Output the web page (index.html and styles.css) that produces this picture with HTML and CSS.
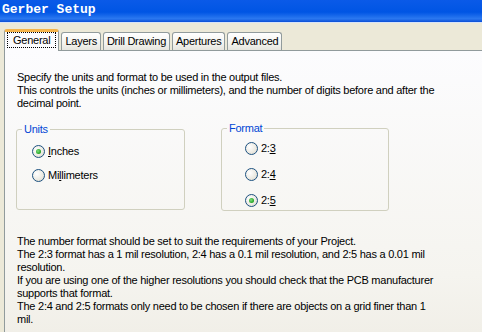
FILE: index.html
```html
<!DOCTYPE html>
<html lang="en">
  <head>
    <meta charset="UTF-8" />
    <title>Gerber Setup</title>
    <link rel="stylesheet" href="styles.css">
  </head>
  <body>
    <div class="titlebar">Gerber Setup</div>
    <div class="dialog">
      <div class="tabs">
        <div class="tab active"><span class="focus">General</span></div>
        <div class="tab">Layers</div>
        <div class="tab">Drill Drawing</div>
        <div class="tab">Apertures</div>
        <div class="tab">Advanced</div>
      </div>
      <div class="panel">
        <p class="intro">
          Specify the units and format to be used in the output files.<br>
          This controls the units (inches or millimeters), and the number of digits before and after the<br>
          decimal point.
        </p>
        <div class="groups">
          <fieldset class="group units">
            <legend>Units</legend>
            <div class="options">
              <label class="radio"><span class="dot checked"></span><span><u>I</u>nches</span></label>
              <label class="radio"><span class="dot"></span><span>Mi<u>l</u>limeters</span></label>
            </div>
          </fieldset>
          <fieldset class="group format">
            <legend>Format</legend>
            <div class="options">
              <label class="radio"><span class="dot"></span><span>2:<u>3</u></span></label>
              <label class="radio"><span class="dot"></span><span>2:<u>4</u></span></label>
              <label class="radio"><span class="dot checked"></span><span>2:<u>5</u></span></label>
            </div>
          </fieldset>
        </div>
        <p class="notes">
          The number format should be set to suit the requirements of your Project.<br>
          The 2:3 format has a 1 mil resolution, 2:4 has a 0.1 mil resolution, and 2:5 has a 0.01 mil<br>
          resolution.<br>
          If you are using one of the higher resolutions you should check that the PCB manufacturer<br>
          supports that format.<br>
          The 2:4 and 2:5 formats only need to be chosen if there are objects on a grid finer than 1<br>
          mil.
        </p>
      </div>
    </div>
  </body>
</html>
```

FILE: styles.css
```css
body {
  margin: 0;
  background-color: #ece9d8;
  font-family: "Liberation Sans", Arial, sans-serif;
  font-size: 11px;
  letter-spacing: -0.25px;
  color: #000;
  overflow: hidden;
  width: 482px;
  height: 332px;
}
.titlebar {
  height: 22px;
  line-height: 19px;
  padding-left: 2px;
  color: #fff;
  font-family: "Liberation Mono", "DejaVu Sans Mono", monospace;
  font-weight: bold;
  font-size: 13px;
  letter-spacing: 0;
  background: linear-gradient(#0a5ae8, #0055e4 55%, #2b78f0 85%, #0b4fd6);
  border-bottom: 1px solid #d7e3f8;
}
.dialog {
  padding: 7px 0 0 4px;
}
.tabs {
  display: flex;
  align-items: flex-end;
  gap: 2px;
  height: 20px;
}
.tab {
  height: 17px;
  line-height: 17px;
  padding: 0 3px;
  border: 1px solid #919b9c;
  border-bottom: none;
  border-radius: 3px 3px 0 0;
  background: linear-gradient(#fff, #f3f3ef 60%, #e6e5de);
}
.tab.active {
  height: 19px;
  line-height: 17px;
  margin-bottom: -1px;
  padding: 0 2px;
  border-top: 3px solid #f5b44a;
  background: #fcfcfe;
  position: relative;
  z-index: 1;
}
.focus {
  display: inline-block;
  line-height: 14px;
  padding: 0 5px;
  border: 1px dotted #000;
}
.panel {
  width: 465px;
  height: 261px;
  border-top: 1px solid #919b9c;
  border-left: 1px solid #919b9c;
  background: linear-gradient(#fcfcfe, #f5f4ef 80%, #f1efe8);
  padding: 20px 0 0 12px;
  line-height: 13px;
  white-space: nowrap;
}
p {
  margin: 0;
}
.groups {
  display: flex;
  gap: 36px;
  margin: 13px 0 0 -1px;
}
.group {
  margin: 0;
  padding: 0;
  border: 1px solid #d0d0bf;
  border-radius: 3px;
}
.group legend {
  color: #0046d5;
  padding: 0 2px;
  margin-left: 5px;
  line-height: 13px;
}
.options {
  display: flex;
  flex-direction: column;
}
.units {
  width: 167px;
  height: 85px;
}
.units .options {
  padding: 9px 0 0 15px;
  gap: 11px;
}
.format {
  width: 166px;
  height: 87px;
  margin-top: -1px;
}
.format .options {
  padding: 7px 0 0 23px;
  gap: 13px;
}
.radio {
  display: flex;
  align-items: center;
  height: 13px;
  gap: 3px;
}
.dot {
  width: 11px;
  height: 11px;
  border: 1px solid #1c5180;
  border-radius: 50%;
  background: radial-gradient(circle at 35% 35%, #fff, #ebe9e1 60%, #d4d1c6);
  position: relative;
}
.dot.checked::after {
  content: "";
  position: absolute;
  left: 3px;
  top: 3px;
  width: 5px;
  height: 5px;
  border-radius: 50%;
  background: radial-gradient(circle at 40% 40%, #7ee07e, #21a121 70%);
}
.notes {
  margin-top: 24px;
}
```
